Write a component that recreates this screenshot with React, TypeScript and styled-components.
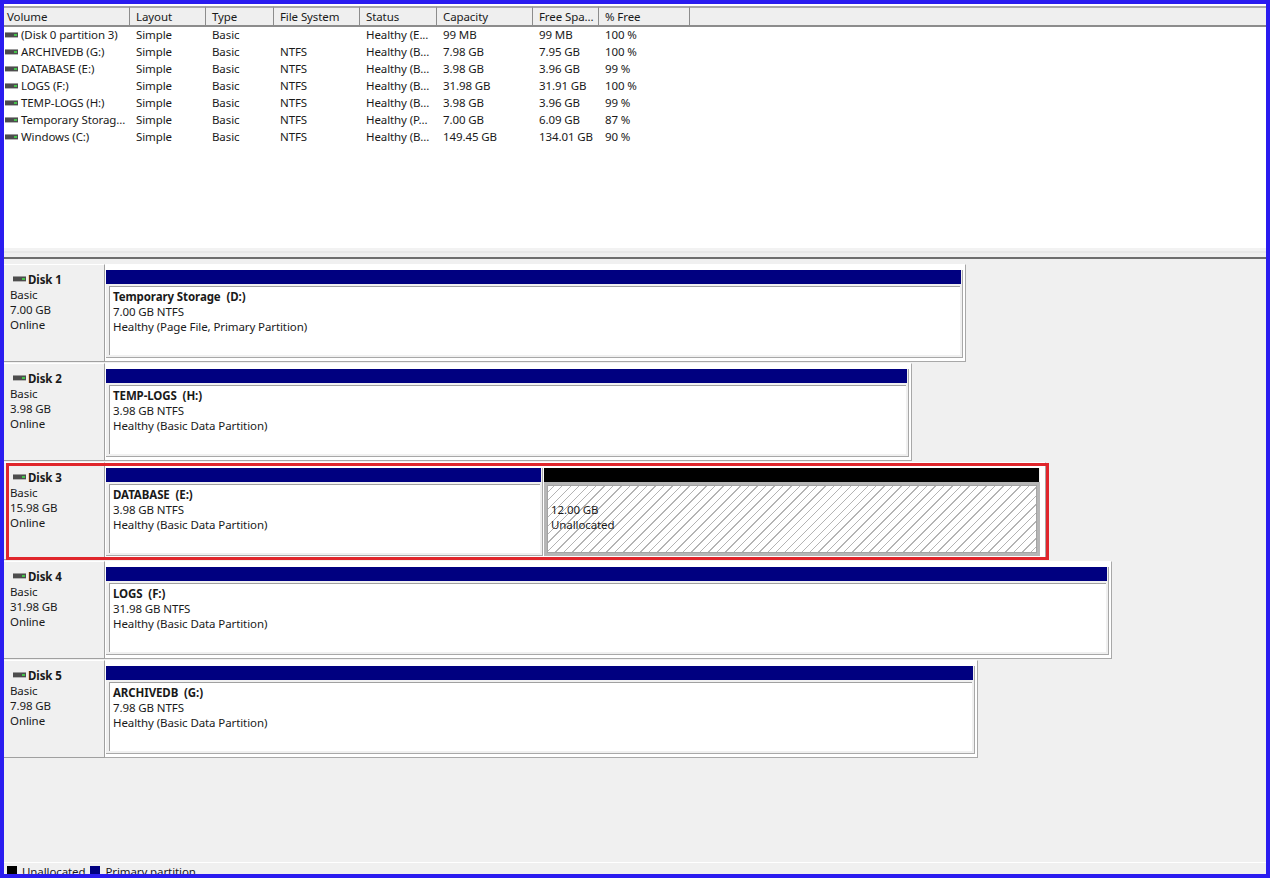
import React from "react";
import styled, { createGlobalStyle } from "styled-components";

const GlobalStyle = createGlobalStyle`
  html, body { margin: 0; padding: 0; background: #f0f0f0; }
  * { box-sizing: border-box; }
`;

const columns = [
  { title: "Volume", width: 126 },
  { title: "Layout", width: 76 },
  { title: "Type", width: 68 },
  { title: "File System", width: 86 },
  { title: "Status", width: 77 },
  { title: "Capacity", width: 96 },
  { title: "Free Spa...", width: 66 },
  { title: "% Free", width: 91 },
];

const volumes = [
  ["(Disk 0 partition 3)", "Simple", "Basic", "", "Healthy (E...", "99 MB", "99 MB", "100 %"],
  ["ARCHIVEDB (G:)", "Simple", "Basic", "NTFS", "Healthy (B...", "7.98 GB", "7.95 GB", "100 %"],
  ["DATABASE (E:)", "Simple", "Basic", "NTFS", "Healthy (B...", "3.98 GB", "3.96 GB", "99 %"],
  ["LOGS (F:)", "Simple", "Basic", "NTFS", "Healthy (B...", "31.98 GB", "31.91 GB", "100 %"],
  ["TEMP-LOGS (H:)", "Simple", "Basic", "NTFS", "Healthy (B...", "3.98 GB", "3.96 GB", "99 %"],
  ["Temporary Storag...", "Simple", "Basic", "NTFS", "Healthy (P...", "7.00 GB", "6.09 GB", "87 %"],
  ["Windows (C:)", "Simple", "Basic", "NTFS", "Healthy (B...", "149.45 GB", "134.01 GB", "90 %"],
];

const disks = [
  { name: "Disk 1", size: "7.00 GB", width: 861, parts: [{ label: "Temporary Storage  (D:)", info: "7.00 GB NTFS", status: "Healthy (Page File, Primary Partition)" }] },
  { name: "Disk 2", size: "3.98 GB", width: 807, parts: [{ label: "TEMP-LOGS  (H:)", info: "3.98 GB NTFS", status: "Healthy (Basic Data Partition)" }] },
  { name: "Disk 3", size: "15.98 GB", width: 941, parts: [{ label: "DATABASE  (E:)", info: "3.98 GB NTFS", status: "Healthy (Basic Data Partition)", width: 437 }] },
  { name: "Disk 4", size: "31.98 GB", width: 1007, parts: [{ label: "LOGS  (F:)", info: "31.98 GB NTFS", status: "Healthy (Basic Data Partition)" }] },
  { name: "Disk 5", size: "7.98 GB", width: 873, parts: [{ label: "ARCHIVEDB  (G:)", info: "7.98 GB NTFS", status: "Healthy (Basic Data Partition)" }] },
];

const DiskIcon = () => (
  <IconBox width="13" height="6" viewBox="0 0 13 6">
    <rect x="0" y="0" width="13" height="1" fill="#9a9a9a" />
    <rect x="0" y="1" width="13" height="4" fill="#4d4d4d" />
    <rect x="0" y="5" width="13" height="1" fill="#b5b5b5" />
    <rect x="9" y="2" width="3" height="2" fill="#45c24a" />
  </IconBox>
);

const App = () => {
  return (
    <Frame>
      <GlobalStyle />
      <ListPane>
        <HeaderRow>
          {columns.map((c) => (
            <HeaderCell key={c.title} $width={c.width}>
              {c.title}
            </HeaderCell>
          ))}
        </HeaderRow>
        {volumes.map((row) => (
          <Row key={row[0]}>
            {row.map((value, i) => (
              <Cell key={i} $width={columns[i].width}>
                {i === 0 && <DiskIcon />}
                {value}
              </Cell>
            ))}
          </Row>
        ))}
      </ListPane>
      <Splitter />
      <DiskPane>
        {disks.map((d) => (
          <DiskRow key={d.name}>
            <DiskLabel>
              <DiskName>
                <DiskIcon />
                {d.name}
              </DiskName>
              <span>Basic</span>
              <span>{d.size}</span>
              <span>Online</span>
            </DiskLabel>
            <DiskBody $width={d.width}>
              {d.parts.map((p) => (
                <Partition key={p.label} $width={p.width}>
                  <Bar />
                  <PartBox>
                    <strong>{p.label}</strong>
                    <span>{p.info}</span>
                    <span>{p.status}</span>
                  </PartBox>
                </Partition>
              ))}
              {d.name === "Disk 3" && (
                <Free>
                  <FreeBar />
                  <Hatch>
                    <span>12.00 GB</span>
                    <span>Unallocated</span>
                  </Hatch>
                </Free>
              )}
            </DiskBody>
          </DiskRow>
        ))}
        <Highlight />
      </DiskPane>
      <Legend>
        <Swatch $color="#000" />
        <span>Unallocated</span>
        <Swatch $color="#000080" />
        <span>Primary partition</span>
      </Legend>
    </Frame>
  );
};

const Frame = styled.div`
  position: relative;
  width: 1270px;
  height: 878px;
  border: 4px solid #2a1cf0;
  background: #f0f0f0;
  overflow: hidden;
  display: flex;
  flex-direction: column;
  font-family: "Noto Sans", "Open Sans", sans-serif;
  font-size: 11.5px;
  letter-spacing: -0.1px;
  color: #1a1a1a;
`;

const IconBox = styled.svg`
  flex: none;
`;

const ListPane = styled.div`
  height: 247px;
  flex: none;
  background: #fff;
  border-bottom: 3px solid #f2f2f2;
`;

const HeaderRow = styled.div`
  display: flex;
  height: 23px;
  padding-top: 2px;
  background: #fff;
  & > div {
    border-top: 2px solid #a8a8a8;
    border-bottom: 2px solid #8c8c8c;
  }
  &::after {
    content: "";
    flex: 1;
    background: #efefef;
    border-top: 2px solid #a8a8a8;
    border-bottom: 2px solid #8c8c8c;
  }
`;

const HeaderCell = styled.div<{ $width: number }>`
  width: ${(p) => p.$width}px;
  flex: none;
  display: flex;
  align-items: center;
  padding-left: 3px;
  background: #efefef;
  border-right: 1px solid #8c8c8c;
  white-space: nowrap;
  overflow: hidden;
  &:not(:first-child) {
    padding-left: 6px;
  }
`;

const Row = styled.div`
  display: flex;
  height: 17px;
  align-items: center;
  padding-bottom: 2px;
`;

const Cell = styled.div<{ $width: number }>`
  width: ${(p) => p.$width}px;
  flex: none;
  display: flex;
  align-items: center;
  gap: 3px;
  padding-left: 6px;
  white-space: nowrap;
  overflow: hidden;
  &:first-child {
    padding-left: 1px;
  }
`;

const Splitter = styled.div`
  height: 8px;
  flex: none;
  background: #f0f0f0;
  border-top: 2px solid #e8e8e8;
  border-bottom: 2px solid #6e6e6e;
  margin-bottom: 5px;
`;

const DiskPane = styled.div`
  position: relative;
  flex: 1;
  min-height: 0;
`;

const DiskRow = styled.div`
  display: flex;
  height: 99px;
`;

const DiskLabel = styled.div`
  width: 101px;
  flex: none;
  height: 98px;
  display: flex;
  flex-direction: column;
  padding: 6px 0 0 6px;
  line-height: 15px;
  border-right: 1px solid #a0a0a0;
  border-bottom: 1px solid #a0a0a0;
  border-top: 1px solid #fff;
`;

const DiskName = styled.div`
  display: flex;
  align-items: center;
  gap: 2px;
  margin-left: 3px;
  font-weight: 700;
  height: 16px;
`;

const DiskBody = styled.div<{ $width: number }>`
  width: ${(p) => p.$width}px;
  height: 98px;
  display: flex;
  padding: 5px 2px 3px 1px;
  background: #fff;
  border-top: 1px solid #fff;
  border-right: 1px solid #a8a8a8;
  border-bottom: 1px solid #a8a8a8;
`;

const Partition = styled.div<{ $width?: number }>`
  flex: ${(p) => (p.$width ? "none" : "1")};
  width: ${(p) => (p.$width ? `${p.$width}px` : "auto")};
  display: flex;
  flex-direction: column;
  min-width: 0;
  background: #f0f0f0;
  border-right: 1px solid #a8a8a8;
  border-bottom: 1px solid #a8a8a8;
`;

const Bar = styled.div`
  height: 14px;
  flex: none;
  margin-right: 1px;
  background: #000080;
`;

const PartBox = styled.div`
  flex: 1;
  margin: 2px 2px 2px 3px;
  padding: 2px 3px 0;
  display: flex;
  flex-direction: column;
  line-height: 15px;
  background: #fff;
  border-top: 1px solid #a0a0a0;
  border-left: 1px solid #a0a0a0;
  strong {
    font-weight: 700;
    white-space: pre;
  }
`;

const Free = styled.div`
  flex: 1;
  margin: 0 3px 0 1px;
  display: flex;
  flex-direction: column;
  background: #f0f0f0;
`;

const FreeBar = styled(Bar)`
  background: #000;
`;

const Hatch = styled.div`
  flex: 1;
  border: 3px solid #b6b6b6;
  box-shadow: inset 0 0 0 1px #a4a4a4;
  display: flex;
  flex-direction: column;
  padding: 17px 0 0 4px;
  line-height: 15px;
  background: repeating-linear-gradient(135deg, #fff 0, #fff 5px, #b4b4b4 5px, #b4b4b4 6px);
  background-clip: padding-box;
`;

const Highlight = styled.div`
  position: absolute;
  left: 2px;
  top: 199px;
  width: 1043px;
  height: 97px;
  border: 3px solid #e0262c;
  pointer-events: none;
`;

const Legend = styled.div`
  height: 12px;
  flex: none;
  display: flex;
  align-items: flex-start;
  gap: 5px;
  padding-left: 3px;
  margin-top: auto;
  border-top: 1px solid #fff;
  line-height: 15px;
  overflow: hidden;
  & > span {
    margin-top: 1px;
  }
`;

const Swatch = styled.div<{ $color: string }>`
  width: 10px;
  height: 10px;
  margin-top: 3px;
  flex: none;
  background: ${(p) => p.$color};
`;

export default App;
